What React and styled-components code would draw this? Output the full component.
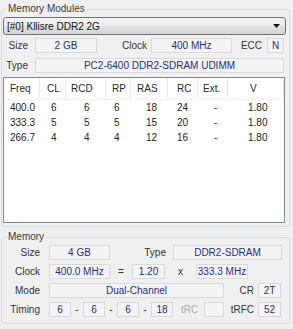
import React from "react";
import styled, {createGlobalStyle} from "styled-components";

const navy = '#1f2d8c';
const ink = '#333333';

const GlobalStyle = createGlobalStyle`
  html, body {
    margin: 0;
    padding: 0;
    background: #f0f0f0;
  }
  body {
    font-family: "Liberation Sans", Arial, sans-serif;
    font-size: 10px;
    color: ${ink};
  }
`;

const Window = styled.div`
  width: 293px;
  height: 329px;
  box-sizing: border-box;
  padding: 3px 3px 0 1px;
  display: flex;
  flex-direction: column;
  gap: 4px;
  overflow: hidden;
`;

const Group = styled.fieldset`
  margin: 0;
  padding: 0 3px ${p => p.$padBottom}px 1px;
  min-width: 0;
  border: 1px solid #d5dfe5;
  border-radius: 3px;
`;

const Legend = styled.legend`
  margin-left: 3px;
  padding: 0 2px;
  line-height: 12px;
  color: #3a3a3a;
`;

const Stack = styled.div`
  display: flex;
  flex-direction: column;
`;

const Combo = styled.div`
  height: 18px;
  margin-top: 2px;
  box-sizing: border-box;
  border: 1px solid #707070;
  border-radius: 3px;
  background: linear-gradient(#f4f4f4, #ececec 50%, #e2e2e2 51%, #d6d6d6);
  display: flex;
  align-items: center;
  justify-content: space-between;
  padding: 0 5px 0 3px;
  color: #111;
`;

const Row = styled.div`
  display: flex;
  align-items: center;
  height: 15px;
  margin-top: ${p => p.$mt}px;
  margin-right: 2px;
`;

const Label = styled.span`
  flex: none;
  width: ${p => p.$w}px;
  box-sizing: border-box;
  margin-right: ${p => p.$gap || 0}px;
  padding-left: ${p => p.$pl || 0}px;
  text-align: ${p => p.$align || 'right'};
  color: ${p => (p.$muted ? '#a9a9a9' : ink)};
  white-space: nowrap;
`;

const Field = styled.div`
  flex: ${p => (p.$grow ? '1 1 auto' : 'none')};
  width: ${p => (p.$grow ? 'auto' : `${p.$w}px`)};
  height: 15px;
  box-sizing: border-box;
  border: 1px solid #dadada;
  background: #f4f4f4;
  color: ${navy};
  text-align: center;
  line-height: 13px;
  white-space: nowrap;
  overflow: hidden;
`;

const Sep = styled.span`
  flex: none;
  width: ${p => p.$w}px;
  text-align: center;
  color: ${ink};
`;

const Table = styled.div`
  height: 146px;
  margin-top: 4px;
  margin-right: 1px;
  box-sizing: border-box;
  border: 1px solid #828790;
  background: #fff;
  display: grid;
  grid-template-columns: ${p => p.$cols};
  grid-template-rows: 22px;
  grid-auto-rows: 15px;
  align-content: start;
`;

const HeadCell = styled.div`
  display: flex;
  align-items: center;
  padding-left: ${p => p.$pl}px;
  border-right: 1px solid #e8e8e8;
  border-bottom: 1px solid #f2f2f2;
  color: #2a2a2a;
  &:last-of-type {
    border-right: none;
  }
`;

const Cell = styled.div`
  display: flex;
  align-items: center;
  padding-left: ${p => p.$pl}px;
  color: #222;
`;

const Arrow = () => (
  <svg width="7" height="4" viewBox="0 0 7 4">
    <path d="M0 0 H7 L3.5 4 Z" fill="#111"/>
  </svg>
);

const columns = [
  {h: 'Freq', w: 36, hp: 6, dp: 6},
  {h: 'CL', w: 26, hp: 7, dp: 11},
  {h: 'RCD', w: 40, hp: 5, dp: 18},
  {h: 'RP', w: 25, hp: 6, dp: 8},
  {h: 'RAS', w: 37, hp: 6, dp: 15},
  {h: 'RC', w: 30, hp: 9, dp: 9},
  {h: 'Ext.', w: 30, hp: 5, dp: 16},
  {h: 'V', w: 56, hp: 22, dp: 20},
];

const timings = [
  ['400.0', '6', '6', '6', '18', '24', '-', '1.80'],
  ['333.3', '5', '5', '5', '15', '20', '-', '1.80'],
  ['266.7', '4', '4', '4', '12', '16', '-', '1.80'],
];

const TimingTable = () => (
  <Table $cols={columns.map(c => `${c.w}px`).join(' ')}>
    {columns.map(c => <HeadCell key={c.h} $pl={c.hp}>{c.h}</HeadCell>)}
    {timings.map((row, r) => row.map((v, i) => (
      <Cell key={`${r}-${i}`} $pl={columns[i].dp}>{v}</Cell>
    )))}
  </Table>
);

const App = () => (
  <>
    <GlobalStyle/>
    <Window>
      <Group $padBottom={3}>
        <Legend>Memory Modules</Legend>
        <Stack>
          <Combo>
            <span>[#0] Kllisre DDR2 2G</span>
            <Arrow/>
          </Combo>
          <Row $mt={3}>
            <Label $w={25} $gap={7}>Size</Label>
            <Field $w={62}>2 GB</Field>
            <Label $w={50} $gap={4}>Clock</Label>
            <Field $w={81}>400 MHz</Field>
            <Label $w={30} $gap={5}>ECC</Label>
            <Field $w={17}>N</Field>
          </Row>
          <Row $mt={5}>
            <Label $w={25} $gap={7}>Type</Label>
            <Field $grow>PC2-6400 DDR2-SDRAM UDIMM</Field>
          </Row>
          <TimingTable/>
        </Stack>
      </Group>

      <Group $padBottom={6}>
        <Legend>Memory</Legend>
        <Stack>
          <Row $mt={2}>
            <Label $w={37} $gap={9}>Size</Label>
            <Field $w={61}>4 GB</Field>
            <Label $w={56} $gap={7}>Type</Label>
            <Field $w={109}>DDR2-SDRAM</Field>
          </Row>
          <Row $mt={4}>
            <Label $w={37} $gap={9}>Clock</Label>
            <Field $w={61}>400.0 MHz</Field>
            <Sep $w={22}>=</Sep>
            <Field $w={33}>1.20</Field>
            <Sep $w={31}>x</Sep>
            <Field $w={52}>333.3 MHz</Field>
          </Row>
          <Row $mt={4}>
            <Label $w={37} $gap={9}>Mode</Label>
            <Field $w={175}>Dual-Channel</Field>
            <Label $w={30} $gap={4}>CR</Label>
            <Field $w={23}>2T</Field>
          </Row>
          <Row $mt={4}>
            <Label $w={37} $gap={9}>Timing</Label>
            <Field $w={22}>6</Field>
            <Sep $w={12}>-</Sep>
            <Field $w={22}>6</Field>
            <Sep $w={12}>-</Sep>
            <Field $w={22}>6</Field>
            <Sep $w={12}>-</Sep>
            <Field $w={22}>18</Field>
            <Label $w={31} $pl={8} $align="left" $muted>tRC</Label>
            <Field $w={20}></Field>
            <Label $w={30} $gap={4}>tRFC</Label>
            <Field $w={23}>52</Field>
          </Row>
        </Stack>
      </Group>
    </Window>
  </>
);

export default App;
